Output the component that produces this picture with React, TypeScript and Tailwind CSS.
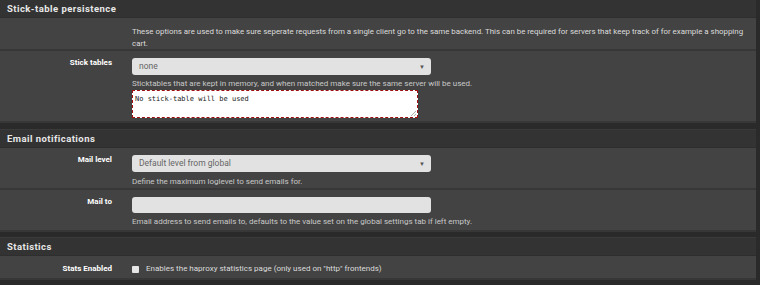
import type { ReactNode } from 'react';

function PanelHeader({ title }: { title: string }) {
  return (
    <div className="h-[18px] bg-[#333333] border-b border-[#2e2e2e] px-[7px] flex items-center">
      <h2 className="text-[9.5px] font-bold tracking-[0.45px] text-[#e8e8e8] leading-none">{title}</h2>
    </div>
  );
}

function Row({ label, children, className = '' }: { label?: string; children: ReactNode; className?: string }) {
  return (
    <div className={`flex bg-[#434343] border-b-2 border-[#373737] ${className}`}>
      <div className="w-[132px] shrink-0 pr-[20px] text-right text-[8px] font-bold text-white leading-[10px]">
        {label}
      </div>
      <div className="flex-1 pr-[2px]">{children}</div>
    </div>
  );
}

function Select({ value, width }: { value: string; width: string }) {
  return (
    <div className={`${width} h-[17px] rounded-[3px] bg-[#e2e2e2] flex items-center justify-between pl-[7px] pr-[6px]`}>
      <span className="text-[8.5px] text-[#666]">{value}</span>
      <span className="text-[6px] text-[#555]">▼</span>
    </div>
  );
}

function Help({ children }: { children: ReactNode }) {
  return <p className="text-[8px] leading-[10px] text-[#c8c8c8]">{children}</p>;
}

export default function App() {
  return (
    <div className="w-[760px] h-[285px] overflow-hidden bg-[#2a2a2a] pr-[4px] font-['Roboto',sans-serif]">
      <section>
        <PanelHeader title="Stick-table persistence" />
        <Row className="h-[33px] pt-[8px]">
          <p className="text-[7.9px] leading-[12px] text-[#dcdcdc]">
            These options are used to make sure seperate requests from a single client go to the same backend. This can be required for servers that keep track of for example a shopping cart.
          </p>
        </Row>
        <Row label="Stick tables" className="h-[72px] pt-[7px] border-b-0">
          <Select value="none" width="w-[299px]" />
          <div className="mt-[4px]">
            <Help>Sticktables that are kept in memory, and when matched make sure the same server will be used.</Help>
          </div>
          <div className="relative mt-[1px] w-[286px] h-[28px] bg-white border border-dashed border-[#a01010] px-[2px] pt-[4px]">
            <div className="font-['DejaVu_Sans_Mono',monospace] text-[7px] leading-[9px] text-[#222]">No stick-table will be used</div>
            <svg className="absolute right-[1px] bottom-[1px]" width="6" height="6" viewBox="0 0 6 6">
              <path d="M6 1 L1 6 M6 4 L4 6" stroke="#999" strokeWidth="0.8" />
            </svg>
          </div>
        </Row>
      </section>

      <div className="h-[6px]" />
      <div className="h-[1px] bg-[#3a3a3a]" />

      <section>
        <PanelHeader title="Email notifications" />
        <Row label="Mail level" className="h-[42px] pt-[7px]">
          <Select value="Default level from global" width="w-[299px]" />
          <div className="mt-[5px]">
            <Help>Define the maximum loglevel to send emails for.</Help>
          </div>
        </Row>
        <Row label="Mail to" className="h-[42px] pt-[7px] border-b-0">
          <div className="w-[299px] h-[16px] rounded-[3px] bg-[#e2e2e2]" />
          <div className="mt-[4px]">
            <Help>Email address to send emails to, defaults to the value set on the global settings tab if left empty.</Help>
          </div>
        </Row>
      </section>

      <div className="h-[5px]" />
      <div className="h-[1px] bg-[#3a3a3a]" />

      <section>
        <PanelHeader title="Statistics" />
        <Row label="Stats Enabled" className="h-[24px] pt-[8px] border-b-0">
          <label className="flex items-center gap-[7px]">
            <span className="w-[7px] h-[7px] bg-[#e6e6e6] rounded-[1px]" />
            <span className="text-[8px] leading-[10px] text-[#dcdcdc]">
              Enables the haproxy statistics page (only used on "http" frontends)
            </span>
          </label>
        </Row>
      </section>
    </div>
  );
}
